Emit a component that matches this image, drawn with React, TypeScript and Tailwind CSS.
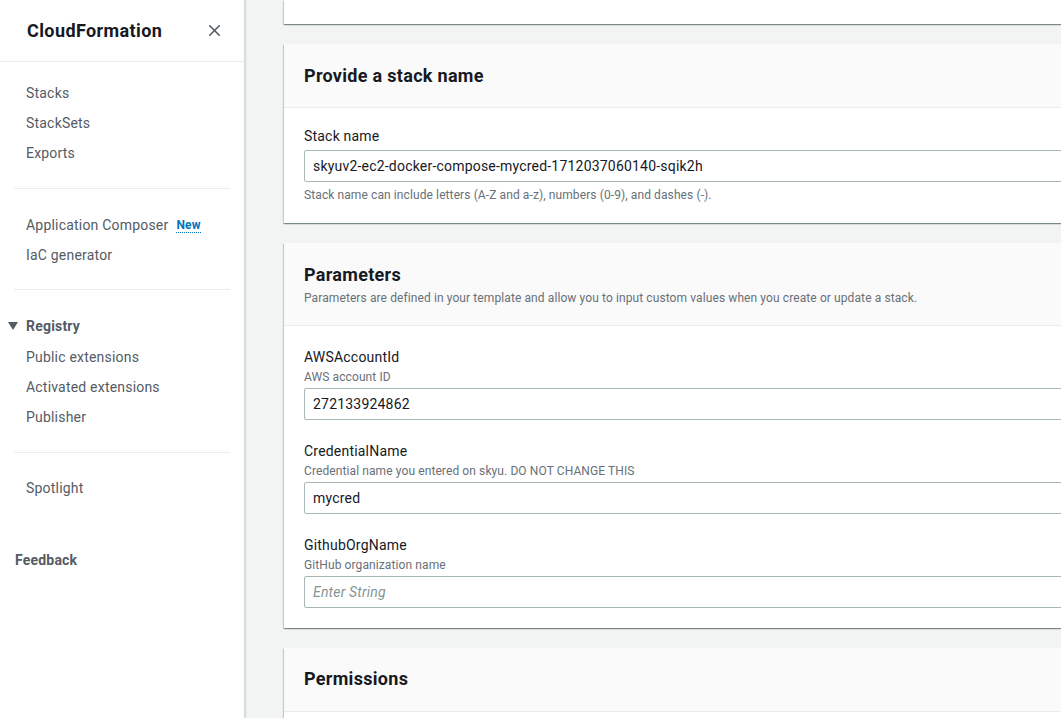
import { X } from "lucide-react";

const font = { fontFamily: "Roboto, 'Noto Sans', Arial, sans-serif" };

const NavLink = ({ children }: { children: React.ReactNode }) => (
  <li className="h-[30px] flex items-center text-[14px] text-[#545b64] pl-[26px]">{children}</li>
);

const Divider = () => <div className="mx-[14px] border-t border-[#eaeded]" />;

const Field = ({
  label,
  desc,
  value,
  placeholder,
}: {
  label: string;
  desc?: string;
  value?: string;
  placeholder?: string;
}) => (
  <div>
    <div className="text-[14px] leading-[20px] text-[#16191f]">{label}</div>
    {desc && <div className="text-[12px] leading-[16px] tracking-[0.1px] text-[#687078] mt-[2px]">{desc}</div>}
    <div className="mt-[3px] h-[32px] border border-[#aab7b8] rounded-[2px] bg-white flex items-center px-[8px] text-[14px]">
      {value ? (
        <span className="text-[#16191f]">{value}</span>
      ) : (
        <span className="italic text-[#879596]">{placeholder}</span>
      )}
    </div>
  </div>
);

const Card = ({ children, className = "" }: { children?: React.ReactNode; className?: string }) => (
  <div
    className={
      "w-[900px] shrink-0 bg-white shadow-[0_1px_1px_0_rgba(0,28,36,0.3),1px_1px_1px_0_rgba(0,28,36,0.15),-1px_1px_1px_0_rgba(0,28,36,0.15)] " +
      className
    }
  >
    {children}
  </div>
);

export default function App() {
  return (
    <div className="h-[718px] w-full flex overflow-hidden bg-[#f2f3f3] tracking-[0.2px]" style={font}>
      <aside className="w-[245px] shrink-0 bg-white border-r border-[#d5dbdb] shadow-[1px_0_1px_0_rgba(0,28,36,0.1)] flex flex-col">
        <div className="h-[62px] flex items-center justify-between pl-[27px] pr-[20px] border-b border-[#eaeded]">
          <span className="text-[18px] font-bold text-[#16191f] tracking-[0.4px]">CloudFormation</span>
          <X className="w-[19px] h-[19px] text-[#545b64]" strokeWidth={2} />
        </div>
        <ul className="pt-[16px] pb-[20px]">
          <NavLink>Stacks</NavLink>
          <NavLink>StackSets</NavLink>
          <NavLink>Exports</NavLink>
        </ul>
        <Divider />
        <ul className="pt-[21px] pb-[19px]">
          <NavLink>
            Application Composer
            <span className="ml-[8px] text-[12px] font-bold text-[#0073bb] border-b border-dotted border-[#0073bb] leading-[14px]">
              New
            </span>
          </NavLink>
          <NavLink>IaC generator</NavLink>
        </ul>
        <Divider />
        <div className="pt-[21px] pb-[20px]">
          <div className="h-[30px] flex items-center pl-[7px] text-[14px] font-bold text-[#545b64]">
            <svg width="12" height="10" viewBox="0 0 12 10" className="mr-[7px]">
              <polygon points="1,1 11,1 6,9" fill="#545b64" />
            </svg>
            Registry
          </div>
          <ul className="mt-[1px]">
            <NavLink>Public extensions</NavLink>
            <NavLink>Activated extensions</NavLink>
            <NavLink>Publisher</NavLink>
          </ul>
        </div>
        <Divider />
        <ul className="pt-[20px]">
          <NavLink>Spotlight</NavLink>
        </ul>
        <div className="pl-[15px] mt-[47px] text-[14px] leading-[20px] font-bold text-[#545b64]">Feedback</div>
      </aside>

      <main className="flex-1 min-w-0 pl-[39px] flex flex-col gap-[20px]">
        <Card className="h-[24px]" />

        <Card>
          <div className="h-[64px] bg-[#fafafa] border-b border-[#eaeded] flex items-center px-[20px]">
            <h2 className="text-[18px] font-bold text-[#16191f] tracking-[0.3px]">Provide a stack name</h2>
          </div>
          <div className="px-[20px] pt-[18px] pb-[20px]">
            <div className="text-[14px] leading-[20px] text-[#16191f]">Stack name</div>
            <div className="mt-[4px] h-[32px] border border-[#aab7b8] rounded-[2px] flex items-center px-[8px] text-[14px] text-[#16191f]">
              skyuv2-ec2-docker-compose-mycred-1712037060140-sqik2h
            </div>
            <div className="text-[12px] leading-[16px] tracking-[0.1px] text-[#687078] mt-[5px]">
              Stack name can include letters (A-Z and a-z), numbers (0-9), and dashes (-).
            </div>
          </div>
        </Card>

        <Card>
          <div className="h-[83px] bg-[#fafafa] border-b border-[#eaeded] flex flex-col justify-center px-[20px] pt-[1px]">
            <h2 className="text-[18px] font-bold leading-[24px] text-[#16191f] tracking-[0.3px]">Parameters</h2>
            <p className="text-[12px] leading-[16px] tracking-[0.1px] text-[#687078] mt-[3px]">
              Parameters are defined in your template and allow you to input custom values when you create or update a stack.
            </p>
          </div>
          <div className="px-[20px] pt-[21px] pb-[20px] flex flex-col gap-[21px]">
            <Field label="AWSAccountId" desc="AWS account ID" value="272133924862" />
            <Field
              label="CredentialName"
              desc="Credential name you entered on skyu. DO NOT CHANGE THIS"
              value="mycred"
            />
            <Field label="GithubOrgName" desc="GitHub organization name" placeholder="Enter String" />
          </div>
        </Card>

        <Card>
          <div className="h-[64px] bg-[#fafafa] border-b border-[#eaeded] flex items-center px-[20px] pb-[2px]">
            <h2 className="text-[18px] font-bold text-[#16191f] tracking-[0.3px]">Permissions</h2>
          </div>
          <div className="h-[60px]" />
        </Card>
      </main>
    </div>
  );
}
